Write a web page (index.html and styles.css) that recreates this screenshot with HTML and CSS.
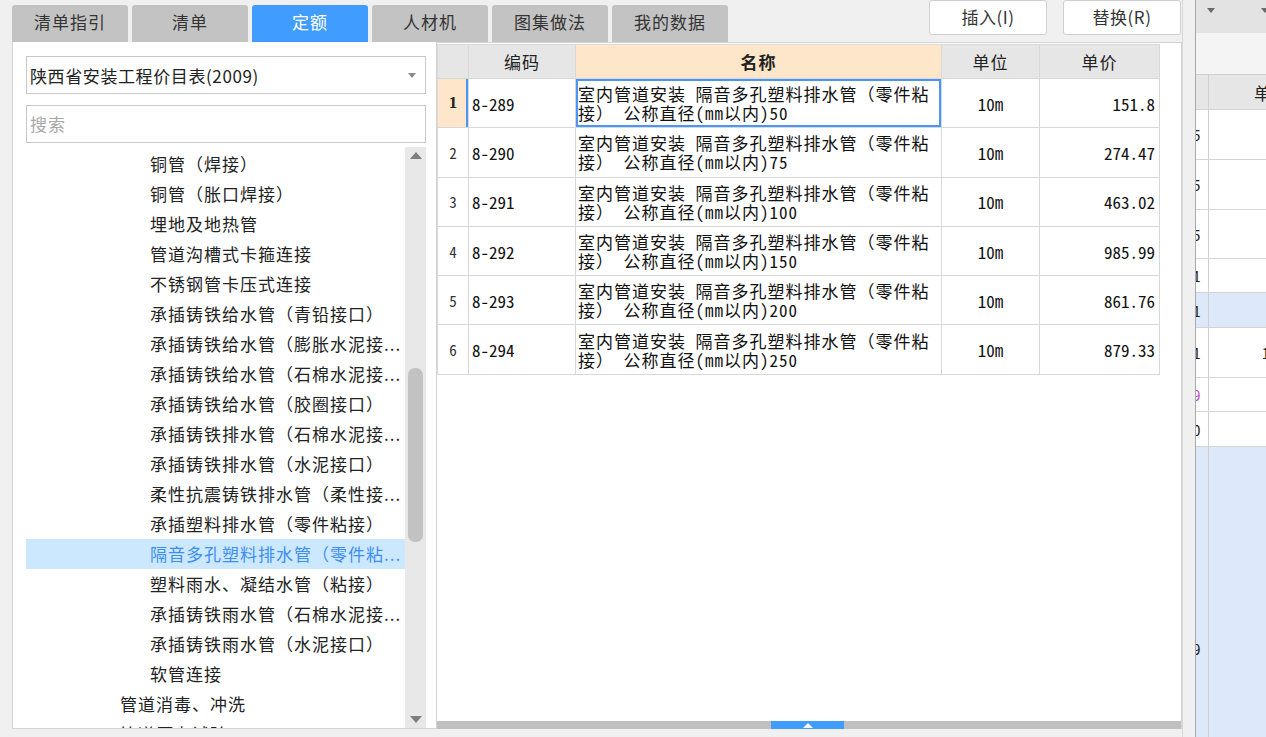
FILE: index.html
```html
<!DOCTYPE html>
<html lang="zh-CN">
<head>
<meta charset="utf-8">
<title>定额</title>
<link rel="stylesheet" href="styles.css">
</head>
<body>
<div class="main">
  <div class="topbar">
    <div class="tabs">
      <div class="tab">清单指引</div>
      <div class="tab">清单</div>
      <div class="tab active">定额</div>
      <div class="tab">人材机</div>
      <div class="tab">图集做法</div>
      <div class="tab">我的数据</div>
    </div>
    <div class="actions">
      <div class="btn">插入(I)</div>
      <div class="btn">替换(R)</div>
    </div>
  </div>
  <div class="content">
    <div class="left">
      <div class="select"><span>陕西省安装工程价目表(2009)</span><span class="caret"></span></div>
      <div class="search">搜索</div>
      <div class="tree">
        <div class="items">
          <div class="item">铜管（焊接）</div>
          <div class="item">铜管（胀口焊接）</div>
          <div class="item">埋地及地热管</div>
          <div class="item">管道沟槽式卡箍连接</div>
          <div class="item">不锈钢管卡压式连接</div>
          <div class="item">承插铸铁给水管（青铅接口）</div>
          <div class="item">承插铸铁给水管（膨胀水泥接...</div>
          <div class="item">承插铸铁给水管（石棉水泥接...</div>
          <div class="item">承插铸铁给水管（胶圈接口）</div>
          <div class="item">承插铸铁排水管（石棉水泥接...</div>
          <div class="item">承插铸铁排水管（水泥接口）</div>
          <div class="item">柔性抗震铸铁排水管（柔性接...</div>
          <div class="item">承插塑料排水管（零件粘接）</div>
          <div class="item sel">隔音多孔塑料排水管（零件粘...</div>
          <div class="item">塑料雨水、凝结水管（粘接）</div>
          <div class="item">承插铸铁雨水管（石棉水泥接...</div>
          <div class="item">承插铸铁雨水管（水泥接口）</div>
          <div class="item">软管连接</div>
          <div class="item l2">管道消毒、冲洗</div>
          <div class="item l2">管道压力试验</div>
        </div>
        <div class="vscroll">
          <span class="arrow-up"></span>
          <span class="thumb"></span>
          <span class="arrow-down"></span>
        </div>
      </div>
    </div>
    <div class="tpanel">
      <div class="tarea">
        <table class="grid">
          <colgroup>
            <col class="c-no"><col class="c-code"><col class="c-name"><col class="c-unit"><col class="c-price">
          </colgroup>
          <thead>
            <tr><th></th><th>编码</th><th class="hl">名称</th><th>单位</th><th>单价</th></tr>
          </thead>
          <tbody>
            <tr class="cur"><td class="no">1</td><td class="code">8-289</td><td class="name">室内管道安装 隔音多孔塑料排水管（零件粘<br>接） 公称直径(mm以内)50</td><td class="unit">10m</td><td class="price">151.8</td></tr>
            <tr><td class="no">2</td><td class="code">8-290</td><td class="name">室内管道安装 隔音多孔塑料排水管（零件粘<br>接） 公称直径(mm以内)75</td><td class="unit">10m</td><td class="price">274.47</td></tr>
            <tr><td class="no">3</td><td class="code">8-291</td><td class="name">室内管道安装 隔音多孔塑料排水管（零件粘<br>接） 公称直径(mm以内)100</td><td class="unit">10m</td><td class="price">463.02</td></tr>
            <tr><td class="no">4</td><td class="code">8-292</td><td class="name">室内管道安装 隔音多孔塑料排水管（零件粘<br>接） 公称直径(mm以内)150</td><td class="unit">10m</td><td class="price">985.99</td></tr>
            <tr><td class="no">5</td><td class="code">8-293</td><td class="name">室内管道安装 隔音多孔塑料排水管（零件粘<br>接） 公称直径(mm以内)200</td><td class="unit">10m</td><td class="price">861.76</td></tr>
            <tr><td class="no">6</td><td class="code">8-294</td><td class="name">室内管道安装 隔音多孔塑料排水管（零件粘<br>接） 公称直径(mm以内)250</td><td class="unit">10m</td><td class="price">879.33</td></tr>
          </tbody>
        </table>
      </div>
      <div class="hscroll"><span class="hthumb"><span class="tri"></span></span></div>
    </div>
  </div>
</div>
<div class="side">
  <div class="sgap"></div>
  <div class="spane">
    <div class="sbar"><span class="dd"></span><span class="dd"></span></div>
    <div class="sbar2"></div>
    <div class="srow shead"><div class="s1"></div><div class="s2"><span class="hdr">单</span></div></div>
    <div class="srow h50"><div class="s1"><span class="dg">5</span></div><div class="s2"></div></div>
    <div class="srow h50"><div class="s1"><span class="dg">5</span></div><div class="s2"></div></div>
    <div class="srow h49"><div class="s1"><span class="dg">5</span></div><div class="s2"></div></div>
    <div class="srow h34"><div class="s1"><span class="dg">1</span></div><div class="s2"></div></div>
    <div class="srow h35 blue"><div class="s1"><span class="dg">1</span></div><div class="s2"></div></div>
    <div class="srow h50"><div class="s1"><span class="dg">1</span></div><div class="s2"><span class="dg2">1</span></div></div>
    <div class="srow h34"><div class="s1"><span class="dg purple">9</span></div><div class="s2"></div></div>
    <div class="srow h35"><div class="s1"><span class="dg">0</span></div><div class="s2"></div></div>
    <div class="srow fill blue"><div class="s1 low"><span class="dg">9</span></div><div class="s2"></div></div>
  </div>
</div>
</body>
</html>
```
FILE: styles.css
```css
* { box-sizing: border-box; margin: 0; padding: 0; }
html, body { width: 1266px; height: 737px; overflow: hidden; }
body {
  background: #f0f0f0;
  font-family: "Noto Sans CJK SC", "Microsoft YaHei", sans-serif;
  color: #222;
  display: flex;
}
.main { width: 1182px; display: flex; flex-direction: column; }

.topbar { height: 42px; display: flex; align-items: flex-start; }
.tabs { display: flex; gap: 4px; padding: 5px 0 0 12px; }
.tab {
  width: 116px; height: 37px;
  background: #c3c3c3;
  border-radius: 3px 3px 0 0;
  font-size: 17px; letter-spacing: 1px; line-height: 34px;
  text-align: center; color: #333;
}
.tab.active { background: #409cff; color: #fff; }
.actions { margin-left: auto; display: flex; gap: 16px; padding-right: 1px; }
.btn {
  width: 118px; height: 35px;
  background: #fff;
  border: 1px solid #cfcfcf;
  border-radius: 3px;
  font-size: 17px; letter-spacing: 0.5px; line-height: 32px;
  text-align: center; color: #333;
}

.content { display: flex; height: 687px; padding-left: 12px; }

.left {
  width: 424px;
  background: #fff;
  border: 1px solid #d3d3d3; border-top: 0; border-right: 0;
  padding: 14px 10px 0 13px;
  display: flex; flex-direction: column;
}
.select {
  height: 38px;
  border: 1px solid #c8c8c8;
  display: flex; align-items: center; justify-content: space-between;
  padding: 0 4px 0 3px;
  font-size: 17px; letter-spacing: 0.6px; color: #222;
}
.caret {
  width: 0; height: 0;
  border-left: 4px solid transparent;
  border-right: 4px solid transparent;
  border-top: 5px solid #8a8a8a;
  margin-right: 5px;
}
.search {
  height: 38px; margin-top: 11px;
  border: 1px solid #c8c8c8;
  font-size: 17px; letter-spacing: 1px; line-height: 35px;
  color: #a8a8a8; padding-left: 3px;
}
.tree { flex: 1; margin-top: 4px; display: flex; min-height: 0; overflow: hidden; }
.items { flex: 1; padding-top: 2px; overflow: hidden; }
.item {
  height: 30px; line-height: 30px;
  font-size: 17px; letter-spacing: 1px; white-space: nowrap;
  padding-left: 124px; color: #222;
}
.item.l2 { padding-left: 94px; }
.item.sel { background: #cce8ff; color: #3d8ef2; }
.vscroll {
  width: 21px; background: #e8e8e8;
  display: flex; flex-direction: column; align-items: center;
  padding: 5px 0 5px;
}
.arrow-up {
  width: 0; height: 0;
  border-left: 6px solid transparent; border-right: 6px solid transparent;
  border-bottom: 7px solid #7e7e7e;
}
.thumb {
  width: 15px; height: 174px;
  margin-top: 209px;
  background: #c2c2c2; border-radius: 7px;
}
.arrow-down {
  margin-top: auto;
  width: 0; height: 0;
  border-left: 6px solid transparent; border-right: 6px solid transparent;
  border-top: 7px solid #7e7e7e;
}

.tpanel {
  width: 746px;
  background: #fff;
  border: 1px solid #d3d3d3; border-bottom: 0;
  display: flex; flex-direction: column;
  padding-top: 1px;
}
.tarea { flex: 1; overflow: hidden; }
.grid { border-collapse: collapse; table-layout: fixed; width: 722px; }
.c-no { width: 31px; }
.c-code { width: 107px; }
.c-name { width: 366px; }
.c-unit { width: 98px; }
.c-price { width: 120px; }
.grid th, .grid td { border: 1px solid #d8d8d8; }
.grid th {
  height: 34px; background: #e6e6e6;
  font-weight: normal; font-size: 17px; letter-spacing: 1px; color: #222;
}
.grid th.hl { background: #fde6c9; font-weight: bold; }
.grid td {
  height: 49.3px;
  font-family: "Noto Sans Mono CJK SC", "Noto Sans CJK SC", "DejaVu Sans Mono", monospace;
  font-size: 17px; color: #111;
  white-space: nowrap;
}
.grid td.no { text-align: center; color: #333; font-size: 15px; }
.grid tr.cur td.no {
  background: #fde6c9;
  font-family: "Liberation Serif", serif; font-weight: bold; font-size: 17px; color: #222;
  box-shadow: inset -2px 0 0 #4a96f5;
}
.grid td.code { padding-left: 3px; }
.grid td.name {
  font-size: 17px; letter-spacing: 1px; line-height: 19px;
  padding-left: 2px; overflow: hidden;
}
.grid tr.cur td.name { box-shadow: inset 0 0 0 2px #4a96f5; }
.grid td.unit { text-align: center; }
.grid td.price { text-align: right; padding-right: 4px; }

.hscroll { height: 8px; background: #c0c0c0; display: flex; padding-left: 334px; }
.hthumb {
  width: 73px; height: 8px; background: #409cff;
  display: flex; align-items: center; justify-content: center;
}
.tri {
  width: 0; height: 0;
  border-left: 5px solid transparent; border-right: 5px solid transparent;
  border-bottom: 5px solid #fff;
}

.side { width: 84px; display: flex; }
.sgap { width: 13px; background: #f0f0f0; border-left: 1px solid #d8d8d8; }
.spane {
  flex: 1; border-left: 1px solid #a9a9a9;
  display: flex; flex-direction: column; overflow: hidden;
}
.sbar {
  height: 33px; background: #e3e3e3;
  display: flex; align-items: flex-start; gap: 46px;
  padding: 8px 0 0 11px;
}
.dd {
  flex: none; width: 0; height: 0;
  border-left: 4px solid transparent; border-right: 4px solid transparent;
  border-top: 5px solid #6a6a6a;
}
.sbar2 { height: 42px; background: #f4f4f4; border-bottom: 1px solid #d0d0d0; }
.srow { display: flex; border-bottom: 1px solid #d4d4d4; background: #fff; }
.s1 {
  width: 13px; border-right: 1px solid #cfcfcf;
  display: flex; align-items: center; overflow: hidden;
}
.s2 { flex: 1; display: flex; align-items: center; overflow: hidden; }
.shead { height: 35px; background: #e6e6e6; }
.hdr { font-size: 17px; padding-left: 45px; color: #222; }
.h50 { height: 50px; }
.h49 { height: 49px; }
.h34 { height: 34px; }
.h35 { height: 35px; }
.blue { background: #dde9fb; }
.fill { flex: 1; border-bottom: 0; }
.s1.low { align-items: flex-start; padding-top: 191px; }
.dg {
  font-family: "Noto Sans Mono CJK SC", "DejaVu Sans Mono", monospace;
  font-size: 15px; color: #222;
  margin-left: -3px;
}
.dg.purple { color: #c54fd6; }
.dg2 {
  font-family: "Noto Sans Mono CJK SC", "DejaVu Sans Mono", monospace;
  font-size: 15px; color: #222; margin-left: 53px;
}
```
